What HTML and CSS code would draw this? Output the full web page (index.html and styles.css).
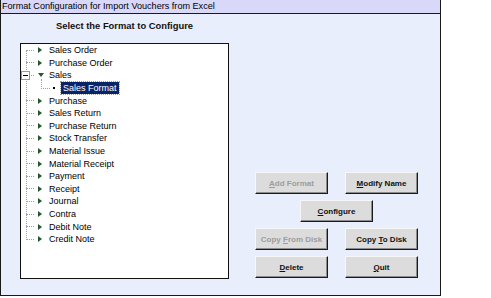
FILE: index.html
```html
<!DOCTYPE html>
<html lang="en">
<head>
    <meta charset="UTF-8">
    <title>Format Configuration for Import Vouchers from Excel</title>
    <link rel="stylesheet" href="styles.css">
</head>
<body>
    <div class="window">
        <div class="titlebar">Format Configuration for Import Vouchers from Excel</div>
        <div class="content">
            <div class="left">
                <div class="heading">Select the Format to Configure</div>
                <div class="treebox">
                    <ul class="tree">
                        <li class="item"><span class="stub"></span><span class="arrow"></span><span class="label">Sales Order</span></li>
                        <li class="item"><span class="stub"></span><span class="arrow"></span><span class="label">Purchase Order</span></li>
                        <li class="item"><span class="toggle"></span><span class="stub short"></span><span class="arrow down"></span><span class="label">Sales</span></li>
                        <li class="item child"><span class="elbow"></span><span class="dot"></span><span class="label selected">Sales Format</span></li>
                        <li class="item"><span class="stub"></span><span class="arrow"></span><span class="label">Purchase</span></li>
                        <li class="item"><span class="stub"></span><span class="arrow"></span><span class="label">Sales Return</span></li>
                        <li class="item"><span class="stub"></span><span class="arrow"></span><span class="label">Purchase Return</span></li>
                        <li class="item"><span class="stub"></span><span class="arrow"></span><span class="label">Stock Transfer</span></li>
                        <li class="item"><span class="stub"></span><span class="arrow"></span><span class="label">Material Issue</span></li>
                        <li class="item"><span class="stub"></span><span class="arrow"></span><span class="label">Material Receipt</span></li>
                        <li class="item"><span class="stub"></span><span class="arrow"></span><span class="label">Payment</span></li>
                        <li class="item"><span class="stub"></span><span class="arrow"></span><span class="label">Receipt</span></li>
                        <li class="item"><span class="stub"></span><span class="arrow"></span><span class="label">Journal</span></li>
                        <li class="item"><span class="stub"></span><span class="arrow"></span><span class="label">Contra</span></li>
                        <li class="item"><span class="stub"></span><span class="arrow"></span><span class="label">Debit Note</span></li>
                        <li class="item"><span class="stub"></span><span class="arrow"></span><span class="label">Credit Note</span></li>
                    </ul>
                </div>
            </div>
            <div class="actions">
                <button class="btn" disabled><u>A</u>dd Format</button>
                <button class="btn"><u>M</u>odify Name</button>
                <button class="btn wide"><u>C</u>onfigure</button>
                <button class="btn" disabled>Copy <u>F</u>rom Disk</button>
                <button class="btn">Copy <u>T</u>o Disk</button>
                <button class="btn"><u>D</u>elete</button>
                <button class="btn"><u>Q</u>uit</button>
            </div>
        </div>
    </div>
</body>
</html>
```

FILE: styles.css
```css
body {
    margin: 0;
    background-color: #ffffff;
    font-family: 'Liberation Sans', Arial, sans-serif;
}

.window {
    width: 441px;
    height: 296px;
    border-left: 1px solid #1a1a1a;
    border-right: 1px solid #1a1a1a;
    border-bottom: 1px solid #1a1a1a;
    background-color: #e9eefc;
    box-sizing: border-box;
}

.titlebar {
    height: 13px;
    line-height: 13px;
    padding-left: 1px;
    background-color: #d9d8f8;
    border-bottom: 1px solid #1a1a1a;
    font-size: 9.1px;
    color: #000;
    white-space: nowrap;
}

.content {
    display: flex;
    padding-left: 19px;
}

.left {
    width: 209px;
}

.heading {
    margin-top: 6px;
    height: 12px;
    line-height: 12px;
    font-size: 9.4px;
    font-weight: bold;
    text-align: center;
    color: #111;
}

.treebox {
    margin-top: 11px;
    height: 236px;
    border: 1px solid #111;
    background-color: #ffffff;
    box-sizing: border-box;
}

/* tree lines */
.tree {
    position: relative;
    list-style: none;
    margin: 0;
    padding: 0 0 0 5px;
}

.tree::before {
    content: "";
    position: absolute;
    left: 5px;
    top: 6px;
    height: 190px;
    border-left: 1px dotted #a0a0a0;
}

.item {
    display: flex;
    align-items: center;
    height: 12.6px;
    font-size: 9px;
    color: #000;
    white-space: nowrap;
}

.stub {
    width: 8px;
    border-top: 1px dotted #a0a0a0;
}

.stub.short {
    width: 3px;
}

.toggle {
    position: relative;
    z-index: 1;
    width: 7px;
    height: 7px;
    margin-left: -5px;
    margin-right: 1px;
    border: 1px solid #9a9a9a;
    background-color: #fff;
}

.toggle::after {
    content: "";
    position: absolute;
    left: 1px;
    top: 3px;
    width: 5px;
    border-top: 1px solid #000;
}

.arrow {
    margin-left: 4px;
    width: 0;
    height: 0;
    border-left: 4px solid #24572a;
    border-top: 3px solid transparent;
    border-bottom: 3px solid transparent;
}

.arrow.down {
    border-left: 3px solid transparent;
    border-right: 3px solid transparent;
    border-top: 4px solid #24572a;
    border-bottom: 0;
}

.label {
    margin-left: 7px;
}

.arrow.down + .label {
    margin-left: 5px;
}

.elbow {
    align-self: flex-start;
    margin-left: 15px;
    margin-top: -3px;
    width: 8px;
    height: 9px;
    border-left: 1px dotted #a0a0a0;
    border-bottom: 1px dotted #a0a0a0;
}

.dot {
    margin-left: 3px;
    width: 2px;
    height: 2px;
    background-color: #000;
}

.label.selected {
    margin-left: 6px;
    padding: 1px 2px;
    background-color: #0a246a;
    color: #fff;
    outline: 1px dotted #a0a0a0;
}

.actions {
    align-self: flex-end;
    display: grid;
    grid-template-columns: 73px 73px;
    column-gap: 17px;
    row-gap: 6px;
    margin-left: 26px;
    margin-bottom: 1px;
}

.btn {
    height: 22px;
    padding: 0;
    border: 1px solid;
    border-color: #f6f6f6 #1a1a1a #1a1a1a #f6f6f6;
    box-shadow: inset -1px -1px 0 #8c8c8c;
    background-color: #dcdcdc;
    font-family: 'Liberation Sans', Arial, sans-serif;
    font-size: 8px;
    font-weight: bold;
    color: #111;
}

.btn:disabled {
    color: #9c9c9c;
}

.btn.wide {
    grid-column: 1 / span 2;
    justify-self: center;
    width: 73px;
}
```
